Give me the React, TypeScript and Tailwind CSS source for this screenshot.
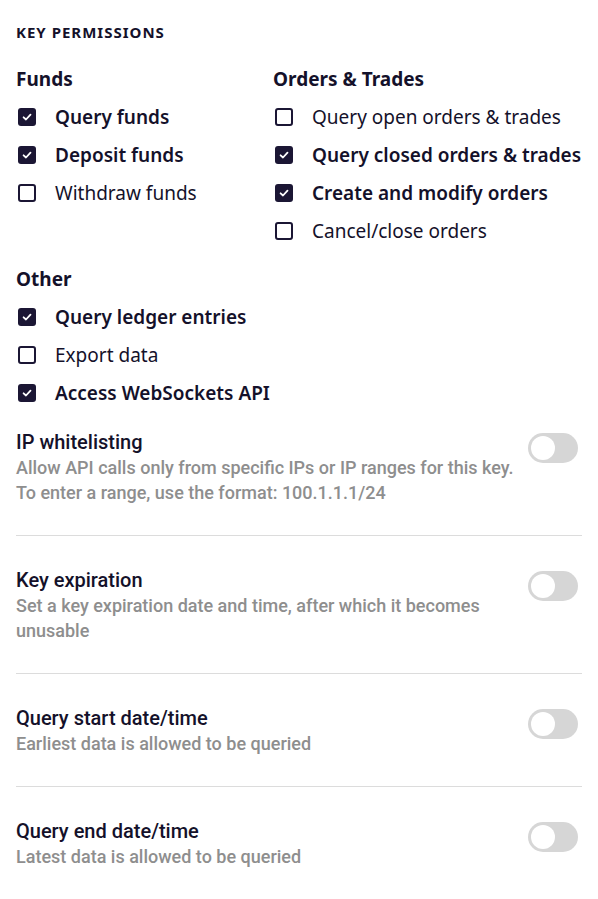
import React from "react";

type Perm = { label: string; checked: boolean };

const funds: Perm[] = [
  { label: "Query funds", checked: true },
  { label: "Deposit funds", checked: true },
  { label: "Withdraw funds", checked: false },
];

const orders: Perm[] = [
  { label: "Query open orders & trades", checked: false },
  { label: "Query closed orders & trades", checked: true },
  { label: "Create and modify orders", checked: true },
  { label: "Cancel/close orders", checked: false },
];

const other: Perm[] = [
  { label: "Query ledger entries", checked: true },
  { label: "Export data", checked: false },
  { label: "Access WebSockets API", checked: true },
];

const settings = [
  {
    title: "IP whitelisting",
    lines: [
      "Allow API calls only from specific IPs or IP ranges for this key.",
      "To enter a range, use the format: 100.1.1.1/24",
    ],
  },
  {
    title: "Key expiration",
    lines: ["Set a key expiration date and time, after which it becomes", "unusable"],
  },
  { title: "Query start date/time", lines: ["Earliest data is allowed to be queried"] },
  { title: "Query end date/time", lines: ["Latest data is allowed to be queried"] },
];

function Checkbox({ checked }: { checked: boolean }) {
  if (checked) {
    return (
      <span className="flex h-[18px] w-[18px] shrink-0 items-center justify-center rounded-[3px] bg-[#1b1634]">
        <svg width="12" height="12" viewBox="0 0 12 12" fill="none">
          <path d="M2.6 6.3 L5 8.5 L9.5 3.7" stroke="white" strokeWidth="1.8" strokeLinecap="round" strokeLinejoin="round" />
        </svg>
      </span>
    );
  }
  return <span className="block h-[18px] w-[18px] shrink-0 rounded-[3px] border-2 border-[#1b1634]" />;
}

function PermGroup({ title, items }: { title: string; items: Perm[] }) {
  return (
    <div>
      <h3 className="mb-[7px] h-6 text-[19px] font-bold leading-6 text-[#14112a]">{title}</h3>
      {items.map((p) => (
        <label key={p.label} className="flex h-[38px] items-center">
          <span className="ml-[2px] mr-[19px] block">
            <Checkbox checked={p.checked} />
          </span>
          <span
            className={`whitespace-nowrap text-[19px] leading-6 text-[#14112a] ${p.checked ? "font-semibold" : "font-normal"}`}
          >
            {p.label}
          </span>
        </label>
      ))}
    </div>
  );
}

function Toggle() {
  return (
    <span className="mr-[4px] mt-[3px] flex h-[30px] w-[50px] shrink-0 items-center rounded-full bg-[#d6d6d6] px-[3px]">
      <span className="h-[24px] w-[24px] rounded-full bg-white" />
    </span>
  );
}

export default function App() {
  return (
    <div className="min-h-screen bg-white px-4 pt-6 font-['Noto_Sans',sans-serif]">
      <div className="text-[15px] font-bold leading-4 tracking-[1px] text-[#14112a]">KEY PERMISSIONS</div>

      <div className="mt-[27px] grid grid-cols-[257px_1fr]">
        <PermGroup title="Funds" items={funds} />
        <PermGroup title="Orders & Trades" items={orders} />
      </div>

      <div className="mt-[17px]">
        <PermGroup title="Other" items={other} />
      </div>

      <div className="font-['Roboto',sans-serif]">
        {settings.map((s, i) => (
          <div
            key={s.title}
            className={`flex items-start justify-between pb-[30px] ${i === 0 ? "pt-[18px]" : "pt-[32px]"} ${
              i < settings.length - 1 ? "border-b border-[#dcdcdc]" : ""
            }`}
          >
            <div>
              <div className="text-[20px] font-medium leading-6 text-[#14112a]">{s.title}</div>
              <div className="mt-[1px] text-[18px] font-medium leading-[25px] text-[#8e8e8e]">
                {s.lines.map((l) => (
                  <div key={l}>{l}</div>
                ))}
              </div>
            </div>
            <Toggle />
          </div>
        ))}
      </div>
    </div>
  );
}
